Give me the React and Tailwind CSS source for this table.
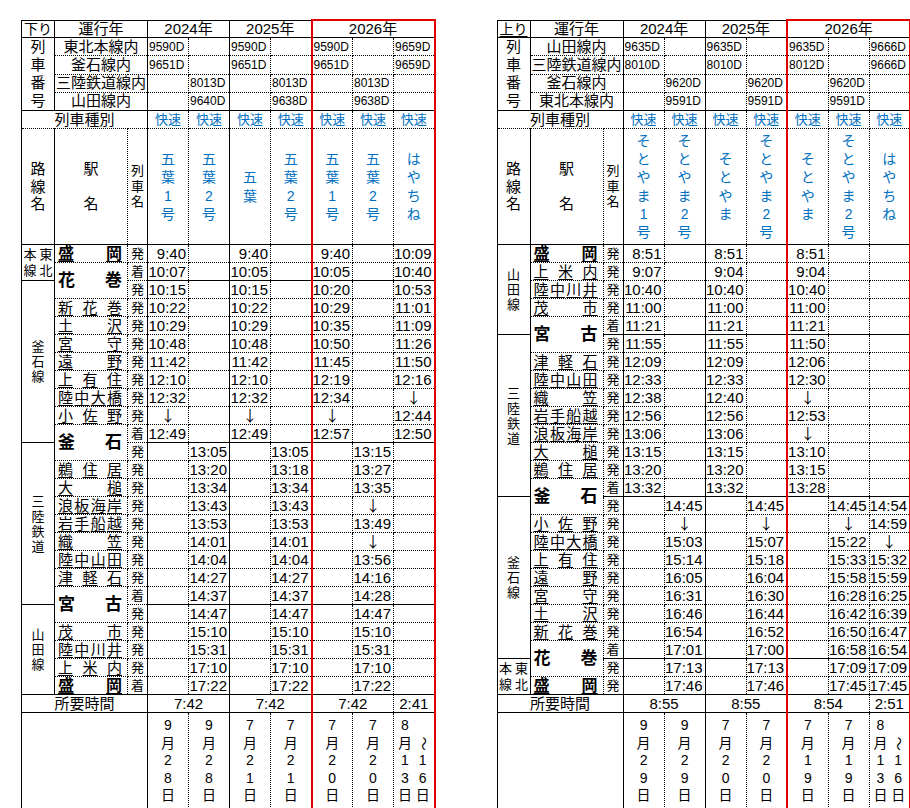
import React from "react";

const RT = [
  "[border-right:1px_solid_#000]",
  "[border-right:1px_dotted_#000]",
  "[border-right:1px_solid_#000]",
  "[border-right:1px_dotted_#000]",
  "[border-right:1px_solid_#000]",
  "[border-right:1px_dotted_#000]",
  "[border-right:2px_solid_#e00000]",
  "[border-right:1px_dotted_#000]",
  "[border-right:1px_dotted_#000]",
  "[border-right:2px_solid_#e00000]",
];
const BS = "[border-bottom:1px_solid_#000]";
const BD = "[border-bottom:1px_dotted_#000]";
const BR = "[border-bottom:2px_solid_#e00000]";

function C({ col, span = 1, rows = 1, b = "d", className = "", children }) {
  const last = col + span - 1;
  const bc = b === "s" ? BS : b === "r" ? BR : b === "n" ? "" : BD;
  return (
    <td colSpan={span} rowSpan={rows} className={`p-0 ${RT[last]} ${bc} ${className}`}>
      {children}
    </td>
  );
}

const chars = (s) => Array.from(s);

function Vert({ text, cls = "" }) {
  return (
    <div className={`flex flex-col items-center ${cls}`}>
      {chars(text).map((c, i) => (
        <span key={i}>{c}</span>
      ))}
    </div>
  );
}

function Station({ row }) {
  const cs = chars(row.st);
  if (row.bold && !row.ul) {
    return (
      <div className="flex justify-between items-center pl-[3px] pr-[5px] text-[17px] font-bold leading-[18px]">
        {cs.map((c, i) => (
          <span key={i}>{c}</span>
        ))}
      </div>
    );
  }
  return (
    <div
      className={`flex justify-between items-end pl-[3px] pr-[5px] leading-[16px] ${
        row.bold ? "text-[16px] font-bold" : "text-[15px]"
      }`}
    >
      {cs.map((c, i) => (
        <span key={i} className="underline underline-offset-[2px]">
          {c}
        </span>
      ))}
    </div>
  );
}

function RouteName({ r }) {
  if (r.two) {
    return (
      <div className="flex flex-col items-center text-[13px] leading-[16px]">
        {r.two.map((l, i) => (
          <div key={i} className="flex gap-[3px]">
            {chars(l).map((c, j) => (
              <span key={j}>{c}</span>
            ))}
          </div>
        ))}
      </div>
    );
  }
  return <Vert text={r.text} cls="text-[13px] leading-[15px]" />;
}

function TimeCell({ t }) {
  if (t === "↓") {
    return <span className="[font-family:'Noto_Sans_CJK_JP',sans-serif] text-black text-[15px]">↓</span>;
  }
  return t;
}

function TimeTable({ dirLabel, dirUl, lines, nums, names, routes, rows, ends, cSolid, totals, dates }) {
  return (
    <table className="border-collapse table-fixed w-[413px] [border-top:1px_solid_#000] [border-left:1px_solid_#000] text-black">
      <colgroup>
        <col className="w-[33px]" />
        <col className="w-[73px]" />
        <col className="w-[20px]" />
        <col className="w-[41px]" />
        <col className="w-[41px]" />
        <col className="w-[41px]" />
        <col className="w-[41px]" />
        <col className="w-[41px]" />
        <col className="w-[41px]" />
        <col className="w-[41px]" />
      </colgroup>
      <tbody>
        <tr className="h-[17px]">
          <C col={0} b="s" className="text-center text-[14px] leading-[16px]">
            <span className={dirUl ? "underline underline-offset-[2px]" : ""}>{dirLabel}</span>
          </C>
          <C col={1} span={2} b="s" className="text-center text-[15px] leading-[16px]">運行年</C>
          <C col={3} span={2} b="s" className="text-center text-[15px] leading-[16px]">2024年</C>
          <C col={5} span={2} b="s" className="text-center text-[15px] leading-[16px]">2025年</C>
          <C col={7} span={3} b="s" className="text-center text-[15px] leading-[16px] [border-top:2px_solid_#e00000]">2026年</C>
        </tr>
        {lines.map((ln, r) => (
          <tr key={"n" + r} className="h-[18px]">
            {r === 0 && (
              <C col={0} rows={4} b="s" className="align-top">
                <div className="flex flex-col">
                  {["列", "車", "番", "号"].map((c) => (
                    <span key={c} className="h-[18px] leading-[18px] text-center text-[15px]">
                      {c}
                    </span>
                  ))}
                </div>
              </C>
            )}
            <C col={1} span={2} b={r === 3 ? "s" : "d"} className="text-center text-[15px] leading-[16px] whitespace-nowrap">
              {ln}
            </C>
            {nums[r].map((n, i) => (
              <C key={i} col={3 + i} b={r === 3 ? "s" : "d"} className="text-[12px] leading-[14px] pl-[1px] text-left align-middle whitespace-nowrap">
                {n}
              </C>
            ))}
          </tr>
        ))}
        <tr className="h-[18px]">
          <C col={0} span={3} b="d" className="text-center text-[15px] leading-[16px]">列車種別</C>
          {names.map((n, i) => (
            <C key={i} col={3 + i} b="d" className="text-center text-[13px] leading-[16px] text-[#0070c0]">
              快速
            </C>
          ))}
        </tr>
        <tr className="h-[116px]">
          <C col={0} b="s">
            <Vert text="路線名" cls="text-[15px] leading-[17.5px]" />
          </C>
          <C col={1} b="s">
            <div className="flex flex-col items-center text-[15px] leading-[17.5px]">
              <span>駅</span>
              <span>&nbsp;</span>
              <span>名</span>
            </div>
          </C>
          <C col={2} b="s">
            <Vert text="列車名" cls="text-[13px] leading-[15.5px]" />
          </C>
          {names.map((n, i) => (
            <C key={i} col={3 + i} b="s">
              <Vert text={n} cls="text-[14px] leading-[18.2px] text-[#0070c0]" />
            </C>
          ))}
        </tr>
        {rows.map((row, i) => {
          const last = i === rows.length - 1;
          const secEnd = ends.includes(i) || last;
          const route = routes.find((r) => r.at === i);
          const span = row.span || 1;
          return (
            <tr key={"r" + i} className="h-[18px]">
              {route && (
                <C col={0} rows={route.span} b="s" className="align-middle">
                  <RouteName r={route} />
                </C>
              )}
              {!row.cont && (
                <C col={1} rows={span} b={i + span - 1 === rows.length - 1 ? "s" : "d"} className={row.bold && !row.ul ? "align-middle" : "align-bottom"}>
                  <Station row={row} />
                </C>
              )}
              <C col={2} b={last || (secEnd && cSolid) ? "s" : "d"} className="text-center text-[13px] leading-[16px] align-middle">
                {row.k || "発"}
              </C>
              {row.t.map((t, j) => (
                <C
                  key={j}
                  col={3 + j}
                  b={secEnd ? "s" : "d"}
                  className={`text-[15px] leading-[16px] align-middle whitespace-nowrap ${t === "↓" ? "text-center" : "text-right pr-[2px]"}`}
                >
                  <TimeCell t={t} />
                </C>
              ))}
            </tr>
          );
        })}
        <tr className="h-[18px]">
          <C col={0} span={3} b="s" className="text-center text-[15px] leading-[16px]">所要時間</C>
          <C col={3} span={2} b="s" className="text-center text-[15px] leading-[16px]">{totals[0]}</C>
          <C col={5} span={2} b="s" className="text-center text-[15px] leading-[16px]">{totals[1]}</C>
          <C col={7} span={2} b="s" className="text-center text-[15px] leading-[16px]">{totals[2]}</C>
          <C col={9} b="s" className="text-center text-[15px] leading-[16px]">{totals[3]}</C>
        </tr>
        <tr className="h-[97px]">
          <C col={0} span={3} b="s"></C>
          {dates.map((d, i) => (
            <C key={i} col={3 + i} b={i >= 4 ? "r" : "s"}>
              <Vert text={d} cls="text-[14px] leading-[17.5px]" />
            </C>
          ))}
          <C col={9} b="r">
            <div className="flex justify-around px-[2px] text-[14px] leading-[17.5px]">
              <div className="flex flex-col items-center">
                {["8", "月", "1", "3", "日"].map((c, k) => (
                  <span key={k}>{c}</span>
                ))}
              </div>
              <div className="flex flex-col items-center">
                <span>&nbsp;</span>
                <span className="inline-block rotate-90">〜</span>
                <span>1</span>
                <span>6</span>
                <span>日</span>
              </div>
            </div>
          </C>
        </tr>
      </tbody>
    </table>
  );
}

const leftRows = [
  { st: "盛岡", bold: true, ul: true, k: "発", t: ["9:40", "", "9:40", "", "9:40", "", "10:09"] },
  { st: "花巻", bold: true, span: 2, k: "着", t: ["10:07", "", "10:05", "", "10:05", "", "10:40"] },
  { cont: true, k: "発", t: ["10:15", "", "10:15", "", "10:20", "", "10:53"] },
  { st: "新花巻", t: ["10:22", "", "10:22", "", "10:29", "", "11:01"] },
  { st: "土沢", t: ["10:29", "", "10:29", "", "10:35", "", "11:09"] },
  { st: "宮守", t: ["10:48", "", "10:48", "", "10:50", "", "11:26"] },
  { st: "遠野", t: ["11:42", "", "11:42", "", "11:45", "", "11:50"] },
  { st: "上有住", t: ["12:10", "", "12:10", "", "12:19", "", "12:16"] },
  { st: "陸中大橋", t: ["12:32", "", "12:32", "", "12:34", "", "↓"] },
  { st: "小佐野", t: ["↓", "", "↓", "", "↓", "", "12:44"] },
  { st: "釜石", bold: true, span: 2, k: "着", t: ["12:49", "", "12:49", "", "12:57", "", "12:50"] },
  { cont: true, k: "発", t: ["", "13:05", "", "13:05", "", "13:15", ""] },
  { st: "鵜住居", t: ["", "13:20", "", "13:18", "", "13:27", ""] },
  { st: "大槌", t: ["", "13:34", "", "13:34", "", "13:35", ""] },
  { st: "浪板海岸", t: ["", "13:43", "", "13:43", "", "↓", ""] },
  { st: "岩手船越", t: ["", "13:53", "", "13:53", "", "13:49", ""] },
  { st: "織笠", t: ["", "14:01", "", "14:01", "", "↓", ""] },
  { st: "陸中山田", t: ["", "14:04", "", "14:04", "", "13:56", ""] },
  { st: "津軽石", t: ["", "14:27", "", "14:27", "", "14:16", ""] },
  { st: "宮古", bold: true, span: 2, k: "着", t: ["", "14:37", "", "14:37", "", "14:28", ""] },
  { cont: true, k: "発", t: ["", "14:47", "", "14:47", "", "14:47", ""] },
  { st: "茂市", t: ["", "15:10", "", "15:10", "", "15:10", ""] },
  { st: "陸中川井", t: ["", "15:31", "", "15:31", "", "15:31", ""] },
  { st: "上米内", t: ["", "17:10", "", "17:10", "", "17:10", ""] },
  { st: "盛岡", bold: true, ul: true, k: "着", t: ["", "17:22", "", "17:22", "", "17:22", ""] },
];

const rightRows = [
  { st: "盛岡", bold: true, ul: true, t: ["8:51", "", "8:51", "", "8:51", "", ""] },
  { st: "上米内", t: ["9:07", "", "9:04", "", "9:04", "", ""] },
  { st: "陸中川井", t: ["10:40", "", "10:40", "", "10:40", "", ""] },
  { st: "茂市", t: ["11:00", "", "11:00", "", "11:00", "", ""] },
  { st: "宮古", bold: true, span: 2, k: "着", t: ["11:21", "", "11:21", "", "11:21", "", ""] },
  { cont: true, k: "発", t: ["11:55", "", "11:55", "", "11:50", "", ""] },
  { st: "津軽石", t: ["12:09", "", "12:09", "", "12:06", "", ""] },
  { st: "陸中山田", t: ["12:33", "", "12:33", "", "12:30", "", ""] },
  { st: "織笠", t: ["12:38", "", "12:40", "", "↓", "", ""] },
  { st: "岩手船越", t: ["12:56", "", "12:56", "", "12:53", "", ""] },
  { st: "浪板海岸", t: ["13:06", "", "13:06", "", "↓", "", ""] },
  { st: "大槌", t: ["13:15", "", "13:15", "", "13:10", "", ""] },
  { st: "鵜住居", t: ["13:20", "", "13:20", "", "13:15", "", ""] },
  { st: "釜石", bold: true, span: 2, k: "着", t: ["13:32", "", "13:32", "", "13:28", "", ""] },
  { cont: true, k: "発", t: ["", "14:45", "", "14:45", "", "14:45", "14:54"] },
  { st: "小佐野", t: ["", "↓", "", "↓", "", "↓", "14:59"] },
  { st: "陸中大橋", t: ["", "15:03", "", "15:07", "", "15:22", "↓"] },
  { st: "上有住", t: ["", "15:14", "", "15:18", "", "15:33", "15:32"] },
  { st: "遠野", t: ["", "16:05", "", "16:04", "", "15:58", "15:59"] },
  { st: "宮守", t: ["", "16:31", "", "16:30", "", "16:28", "16:25"] },
  { st: "土沢", t: ["", "16:46", "", "16:44", "", "16:42", "16:39"] },
  { st: "新花巻", t: ["", "16:54", "", "16:52", "", "16:50", "16:47"] },
  { st: "花巻", bold: true, span: 2, k: "着", t: ["", "17:01", "", "17:00", "", "16:58", "16:54"] },
  { cont: true, k: "発", t: ["", "17:13", "", "17:13", "", "17:09", "17:09"] },
  { st: "盛岡", bold: true, ul: true, t: ["", "17:46", "", "17:46", "", "17:45", "17:45"] },
];

export default function App() {
  return (
    <div className="w-[910px] h-[808px] bg-white flex gap-[61px] pl-[21px] pt-[19px] [font-family:'Liberation_Sans','Noto_Sans_CJK_JP',sans-serif]">
      <TimeTable
        dirLabel="下り"
        lines={["東北本線内", "釜石線内", "三陸鉄道線内", "山田線内"]}
        nums={[
          ["9590D", "", "9590D", "", "9590D", "", "9659D"],
          ["9651D", "", "9651D", "", "9651D", "", "9659D"],
          ["", "8013D", "", "8013D", "", "8013D", ""],
          ["", "9640D", "", "9638D", "", "9638D", ""],
        ]}
        names={["五葉1号", "五葉2号", "五葉", "五葉2号", "五葉1号", "五葉2号", "はやちね"]}
        routes={[
          { at: 0, span: 2, two: ["本東", "線北"] },
          { at: 2, span: 9, text: "釜石線" },
          { at: 11, span: 9, text: "三陸鉄道" },
          { at: 20, span: 5, text: "山田線" },
        ]}
        rows={leftRows}
        ends={[1, 10, 19]}
        cSolid={false}
        totals={["7:42", "7:42", "7:42", "2:41"]}
        dates={["9月28日", "9月28日", "7月21日", "7月21日", "7月20日", "7月20日"]}
      />
      <TimeTable
        dirLabel="上り"
        dirUl
        lines={["山田線内", "三陸鉄道線内", "釜石線内", "東北本線内"]}
        nums={[
          ["9635D", "", "9635D", "", "9635D", "", "9666D"],
          ["8010D", "", "8010D", "", "8012D", "", "9666D"],
          ["", "9620D", "", "9620D", "", "9620D", ""],
          ["", "9591D", "", "9591D", "", "9591D", ""],
        ]}
        names={["そとやま1号", "そとやま2号", "そとやま", "そとやま2号", "そとやま", "そとやま2号", "はやちね"]}
        routes={[
          { at: 0, span: 5, text: "山田線" },
          { at: 5, span: 9, text: "三陸鉄道" },
          { at: 14, span: 9, text: "釜石線" },
          { at: 23, span: 2, two: ["本東", "線北"] },
        ]}
        rows={rightRows}
        ends={[4, 13, 22]}
        cSolid={true}
        totals={["8:55", "8:55", "8:54", "2:51"]}
        dates={["9月29日", "9月29日", "7月20日", "7月20日", "7月19日", "7月19日"]}
      />
    </div>
  );
}
